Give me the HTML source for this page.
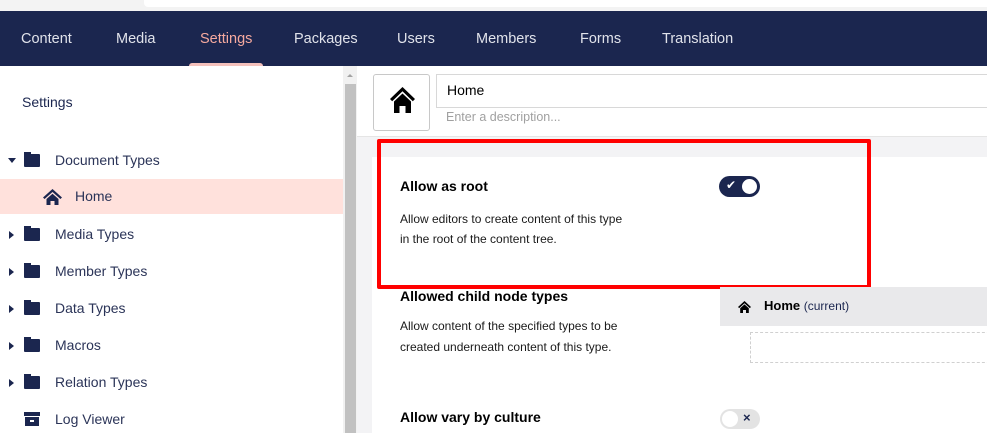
<!DOCTYPE html>
<html><head><style>
*{margin:0;padding:0;box-sizing:border-box}
html,body{width:987px;height:433px;overflow:hidden}
body{font-family:"Liberation Sans",sans-serif;background:#f3f3f5;position:relative;color:#1b264f}
.a{position:absolute}
.nav span{position:absolute;top:31px;color:#e0e2ea;font-size:14.5px}
.tree div{position:absolute;left:0;width:343px;height:37px;font-size:14px;color:#2b3458}
.tree .t{position:absolute;left:55px;top:10px}
.car{position:absolute;left:9px;top:15px;width:0;height:0;border-top:4px solid transparent;border-bottom:4px solid transparent;border-left:5px solid #1b264f}
.fold{position:absolute;left:24px;top:12px;width:16px;height:13px;background:#1b264f;border-radius:1px}
.fold:before{content:"";position:absolute;left:0;top:-2px;width:7px;height:3px;background:#1b264f}
.h{font-weight:bold;font-size:14px;color:#000}
</style></head><body>
<div class="a" style="left:0;top:0;width:987px;height:11px;background:#f3f3f3"></div>
<div class="a" style="left:144px;top:0;width:843px;height:7px;background:#fff;border-radius:0 0 0 4px"></div>
<div class="a nav" style="left:0;top:11px;width:987px;height:55px;background:#1b264f">
<span style="left:21px;top:20px">Content</span>
<span style="left:116px;top:20px">Media</span>
<span style="left:200px;top:20px;color:#f5a99f">Settings</span>
<span style="left:294px;top:20px">Packages</span>
<span style="left:397px;top:20px">Users</span>
<span style="left:476px;top:20px">Members</span>
<span style="left:580px;top:20px">Forms</span>
<span style="left:662px;top:20px">Translation</span>
<div class="a" style="left:189px;top:52px;width:74px;height:3px;background:#f5c1bc;border-radius:3px 3px 0 0"></div>
</div>
<div class="a" style="left:0;top:66px;width:343px;height:367px;background:#fff"></div>
<div class="a" style="left:343px;top:66px;width:14px;height:367px;background:#f1f1f1"></div>
<div class="a" style="left:345px;top:84px;width:11px;height:349px;background:#c1c1c1"></div>
<div class="a" style="left:347px;top:74px;width:0;height:0;border-left:3px solid transparent;border-right:3px solid transparent;border-bottom:3px solid #a3a3a3"></div>
<div class="a" style="left:22px;top:94px;font-size:14px;color:#1b264f">Settings</div>
<div class="tree">
<div style="top:142px"><span class="car" style="left:8px;top:16px;border-left:4px solid transparent;border-right:4px solid transparent;border-top:5px solid #1b264f;border-bottom:0"></span><span class="fold"></span><span class="t">Document Types</span></div>
<div style="top:179px;background:#ffe1dc;height:35px"><svg class="a" style="left:43px;top:10px" width="19" height="16" viewBox="0 0 19 16"><path d="M9.5 0L0 8.5l1.6 1.5L9.5 3l7.9 7 1.6-1.5z M3.5 10L9.5 4.8 15.5 10V16h-4v-4h-4v4h-4z" fill="#1b264f"/></svg><span class="t" style="left:75px;top:9px">Home</span></div>
<div style="top:216px"><span class="car"></span><span class="fold"></span><span class="t">Media Types</span></div>
<div style="top:253px"><span class="car"></span><span class="fold"></span><span class="t">Member Types</span></div>
<div style="top:290px"><span class="car"></span><span class="fold"></span><span class="t">Data Types</span></div>
<div style="top:327px"><span class="car"></span><span class="fold"></span><span class="t">Macros</span></div>
<div style="top:364px"><span class="car"></span><span class="fold"></span><span class="t">Relation Types</span></div>
<div style="top:401px"><span class="a" style="left:24px;top:11px;width:16px;height:4px;background:#1b264f"></span><span class="a" style="left:25px;top:16px;width:14px;height:9px;background:#1b264f"></span><span class="a" style="left:30px;top:19px;width:4px;height:1.5px;background:#fff"></span><span class="t">Log Viewer</span></div>
</div>
<div class="a" style="left:357px;top:66px;width:630px;height:71px;background:#fff;border-bottom:1px solid #e5e5e5"></div>
<div class="a" style="left:373px;top:74px;width:57px;height:57px;border:1px solid #c8c8c8;border-radius:3px;background:#fff"><svg class="a" style="left:16px;top:12px" width="25" height="26" viewBox="0 0 25 26"><path d="M12.5 0L0 12l2.2 2.2L12.5 4.2l10.3 10 2.2-2.2z M4 14.5L12.5 6.5 21 14.5V26h-5.5v-7h-6v7H4z" fill="#000"/></svg></div>
<div class="a" style="left:436px;top:74px;width:560px;height:34px;border:1px solid #d8d8d8;background:#fff"></div>
<div class="a" style="left:447px;top:82px;font-size:14px;color:#000">Home</div>
<div class="a" style="left:446px;top:110px;font-size:12.5px;color:#a0a0a0">Enter a description...</div>
<div class="a" style="left:372px;top:157px;width:615px;height:276px;background:#fff"></div>
<div class="a" style="left:377px;top:139px;width:494px;height:150px;border:4px solid #f00;border-radius:2px"></div>
<div class="a h" style="left:400px;top:178px">Allow as root</div>
<div class="a" style="left:400px;top:209px;font-size:12px;color:#1a1a1a;line-height:20px">Allow editors to create content of this type<br>in the root of the content tree.</div>
<div class="a" style="left:719px;top:176px;width:41px;height:21px;border-radius:11px;background:#1b264f"><span class="a" style="left:7px;top:2px;color:#fff;font-size:12px">✔</span><span class="a" style="left:23px;top:3px;width:15px;height:15px;border-radius:50%;background:#fff"></span></div>
<div class="a h" style="left:400px;top:288px">Allowed child node types</div>
<div class="a" style="left:400px;top:316px;font-size:12px;color:#1a1a1a;line-height:21px">Allow content of the specified types to be<br>created underneath content of this type.</div>
<div class="a" style="left:720px;top:287px;width:267px;height:39px;background:#e9e9eb"></div>
<svg class="a" style="left:738px;top:301px" width="13" height="12" viewBox="0 0 13 12"><path d="M6.5 0L0 6l1.2 1.1L6.5 2.2l5.3 4.9L13 6z M2.2 7.2L6.5 3.4 10.8 7.2V12H8V9H5v3H2.2z" fill="#000"/></svg>
<div class="a" style="left:764px;top:298px;font-size:13px;color:#000;font-weight:bold">Home <span style="font-size:12px;color:#1b264f;font-weight:normal">(current)</span></div>
<div class="a" style="left:750px;top:332px;width:250px;height:31px;border:1px dashed #d0d0d0"></div>
<div class="a h" style="left:400px;top:409px">Allow vary by culture</div>
<div class="a" style="left:720px;top:409px;width:40px;height:20px;border-radius:10px;background:#e3e3e3"><span class="a" style="left:2px;top:2px;width:16px;height:16px;border-radius:50%;background:#fff"></span><span class="a" style="left:23px;top:1px;font-size:13px;font-weight:bold;color:#1b264f">×</span></div>
</body></html>
